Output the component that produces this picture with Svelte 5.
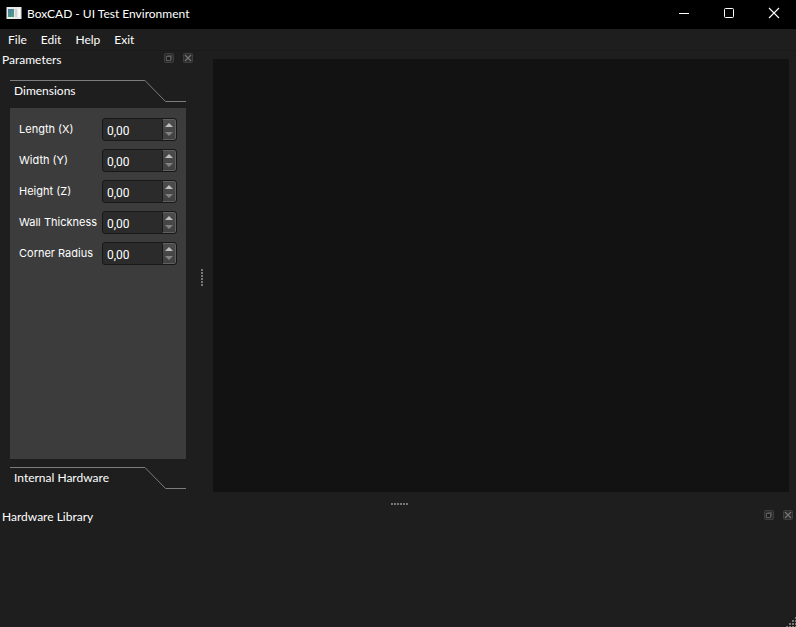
<script lang="ts">
  type Field = { id: string; label: string; value: string };

  let menus = ['File', 'Edit', 'Help', 'Exit'];

  let fields: Field[] = $state([
    { id: 'length', label: 'Length (X)', value: '0,00' },
    { id: 'width', label: 'Width (Y)', value: '0,00' },
    { id: 'height', label: 'Height (Z)', value: '0,00' },
    { id: 'thickness', label: 'Wall Thickness', value: '0,00' },
    { id: 'radius', label: 'Corner Radius', value: '0,00' }
  ]);

  let openTab = $state('dimensions');

  function step(field: Field, delta: number) {
    const current = parseFloat(field.value.replace(',', '.')) || 0;
    field.value = Math.max(0, current + delta).toFixed(2).replace('.', ',');
  }
</script>

{#snippet dockTitle(title: string)}
  <div class="dock-title">
    <h2>{title}</h2>
    <button class="dock-button" aria-label="Float {title}">
      <svg width="10" height="10" viewBox="0 0 10 10">
        <rect x="0.5" y="0.5" width="9" height="9" rx="1" fill="#2c2c2c" stroke="#3e3e3e" />
        <path d="M3.5 2.5h4v4" fill="none" stroke="#484848" />
        <rect x="2.5" y="3.5" width="4" height="4" fill="#1c1c1c" stroke="#5c5c5c" />
      </svg>
    </button>
    <button class="dock-button" aria-label="Close {title}">
      <svg width="10" height="10" viewBox="0 0 10 10">
        <rect x="0.5" y="0.5" width="9" height="9" rx="1" fill="#2c2c2c" stroke="#3e3e3e" />
        <path d="M2 2l6 6M8 2l-6 6" stroke="#767676" stroke-width="1.2" />
      </svg>
    </button>
  </div>
{/snippet}

{#snippet tab(id: string, title: string)}
  <button class="tab" aria-expanded={openTab === id} onclick={() => (openTab = id)}>
    <span class="tab-label">{title}</span>
    <svg width="41" height="22" viewBox="0 0 41 22">
      <path d="M0 0.5L20.5 21.5H41" fill="none" stroke="#7c7c7c" />
    </svg>
  </button>
{/snippet}

<div class="window">
  <header class="titlebar">
    <svg class="app-icon" width="16" height="14" viewBox="0 0 16 14">
      <defs>
        <linearGradient id="screen" x1="0" y1="0" x2="1" y2="1">
          <stop offset="0" stop-color="#4c79a8" />
          <stop offset="1" stop-color="#4fa57c" />
        </linearGradient>
      </defs>
      <rect x="0.5" y="1" width="15" height="12" fill="#e8eaea" />
      <rect x="2" y="3" width="6" height="8" fill="url(#screen)" />
      <rect x="9" y="3" width="2" height="8" fill="#d0d3d3" />
      <rect x="12" y="3" width="2" height="8" fill="#f8f8f8" />
    </svg>
    <h1>BoxCAD - UI Test Environment</h1>
    <div class="window-buttons">
      <button aria-label="Minimize">
        <svg width="12" height="12" viewBox="0 0 12 12"><path d="M1 6.5h10" stroke="#fff" /></svg>
      </button>
      <button aria-label="Maximize">
        <svg width="12" height="12" viewBox="0 0 12 12">
          <rect x="1.5" y="1.5" width="9" height="9" rx="1" fill="none" stroke="#fff" />
        </svg>
      </button>
      <button aria-label="Close">
        <svg width="12" height="12" viewBox="0 0 12 12">
          <path d="M1 1l10 10M11 1L1 11" stroke="#fff" stroke-width="1.1" />
        </svg>
      </button>
    </div>
  </header>

  <nav class="menubar">
    {#each menus as menu}
      <button>{menu}</button>
    {/each}
  </nav>

  <main class="workspace">
    <aside class="dock">
      {@render dockTitle('Parameters')}
      <div class="toolbox">
        {@render tab('dimensions', 'Dimensions')}
        {#if openTab === 'dimensions'}
          <div class="page">
            {#each fields as field}
              <label for={field.id}>{field.label}</label>
              <div class="spinbox">
                <input id={field.id} type="text" inputmode="decimal" bind:value={field.value} />
                <div class="steps">
                  <button aria-label="Increase {field.label}" onclick={() => step(field, 1)}>
                    <svg width="8" height="4" viewBox="0 0 8 4"><path d="M0 4L4 0l4 4z" fill="#bdbdbd" /></svg>
                  </button>
                  <button aria-label="Decrease {field.label}" onclick={() => step(field, -1)}>
                    <svg width="8" height="4" viewBox="0 0 8 4"><path d="M0 0l4 4 4-4z" fill="#828282" /></svg>
                  </button>
                </div>
              </div>
            {/each}
          </div>
        {/if}
        {@render tab('hardware', 'Internal Hardware')}
        {#if openTab === 'hardware'}
          <div class="page"></div>
        {/if}
      </div>
    </aside>

    <div class="splitter vertical"><span class="grip"></span></div>

    <section class="viewport" aria-label="Viewport"></section>
  </main>

  <div class="splitter horizontal"><span class="grip"></span></div>

  <section class="library">
    {@render dockTitle('Hardware Library')}
  </section>

  <svg class="size-grip" width="10" height="10" viewBox="0 0 10 10" shape-rendering="crispEdges">
    <path d="M9 0h1v2h-1zM6 3h2v2h-2zM9 3h1v2h-1zM3 6h2v2h-2zM6 6h2v2h-2zM9 6h1v2h-1zM0 9h2v1h-2zM3 9h2v1h-2zM6 9h2v1h-2zM9 9h1v1h-1z" fill="#777" />
  </svg>
</div>

<style>
:global(body) {
  margin: 0;
  background: #1e1e1e;
}

.window {
  position: relative;
  display: flex;
  flex-direction: column;
  min-height: 100vh;
  background: #1e1e1e;
  color: #fff;
  font-family: "Segoe UI", Lato, "Open Sans", sans-serif;
  font-size: 12px;
  line-height: 16px;
}

h1,
h2 {
  margin: 0;
  font-size: 12px;
  font-weight: 400;
}

button {
  margin: 0;
  padding: 0;
  border: none;
  background: none;
  color: inherit;
  font: inherit;
}

svg {
  display: block;
}

.titlebar {
  display: flex;
  align-items: center;
  height: 29px;
  padding-left: 6px;
  background: #000;
}

.app-icon {
  margin: 0 5px 3px 0;
}

h1 {
  flex: 1;
  padding-bottom: 2px;
}

.window-buttons {
  display: flex;
  align-self: stretch;
}

.window-buttons button {
  display: flex;
  align-items: center;
  justify-content: center;
  width: 45px;
  padding-bottom: 3px;
}

.menubar {
  display: flex;
  gap: 14px;
  height: 21px;
  padding-left: 8px;
  border-bottom: 1px solid #1a1a1a;
}

.workspace {
  display: flex;
  flex: 1;
}

.dock {
  display: flex;
  flex-direction: column;
  width: 196px;
}

.dock-title {
  display: flex;
  align-items: flex-start;
  gap: 9px;
  padding: 1px 3px 0 2px;
}

.dock-title h2 {
  flex: 1;
}

.dock-button {
  margin-top: 1px;
}

.toolbox {
  display: flex;
  flex: 1;
  flex-direction: column;
  gap: 6px;
  padding: 12px 10px 10px;
}

.tab {
  display: flex;
  width: 100%;
  text-align: left;
}

.tab-label {
  flex: 1;
  padding: 2px 0 3px 4px;
  border-top: 1px solid #7c7c7c;
}

.page {
  display: grid;
  flex: 1;
  grid-template-columns: minmax(0, 1fr) 75px;
  align-content: start;
  align-items: center;
  gap: 8px 6px;
  margin-bottom: 2px;
  padding: 10px 9px;
  background: #3c3c3c;
}

.page label {
  padding-bottom: 2px;
  font-family: Inter, "Liberation Sans", sans-serif;
  font-size: 11px;
  white-space: nowrap;
}

.spinbox {
  display: flex;
  height: 21px;
  border: 1px solid #181818;
  border-radius: 3px;
  background: #2b2b2b;
  overflow: hidden;
}

.spinbox input {
  flex: 1;
  min-width: 0;
  padding: 2px 0 0 4px;
  border: none;
  outline: none;
  background: none;
  color: #fff;
  font-family: Roboto, "Liberation Sans", sans-serif;
  font-size: 12px;
}

.steps {
  display: flex;
  flex-direction: column;
  justify-content: center;
  gap: 5px;
  width: 12px;
  border: 1px solid #606060;
  border-left-color: #181818;
  border-radius: 0 2px 2px 0;
  background: linear-gradient(#4c4c4c, #414141);
}

.steps button {
  display: flex;
  justify-content: center;
}

.splitter {
  display: flex;
  align-items: center;
  justify-content: center;
}

.vertical {
  width: 11px;
  padding-top: 4px;
}

.vertical .grip {
  width: 2px;
  height: 17px;
  background: repeating-linear-gradient(#777 0 2px, transparent 2px 3px);
}

.horizontal {
  height: 9px;
  padding-left: 2px;
}

.horizontal .grip {
  width: 17px;
  height: 2px;
  background: repeating-linear-gradient(90deg, #777 0 2px, transparent 2px 3px);
}

.viewport {
  flex: 1;
  margin: 8px 7px 7px 6px;
  background: #121212;
}

.library {
  min-height: 119px;
}

.size-grip {
  position: absolute;
  right: 0;
  bottom: 0;
}
</style>
